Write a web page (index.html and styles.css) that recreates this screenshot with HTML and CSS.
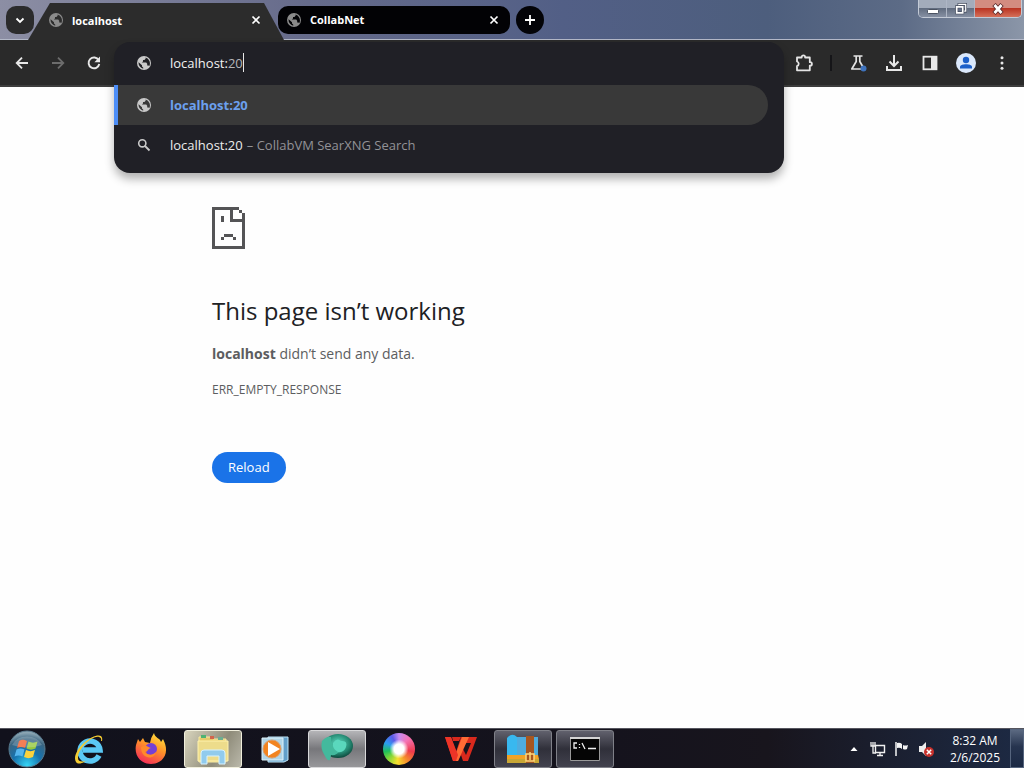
FILE: index.html
```
<!DOCTYPE html>
<html lang="en">
<head>
<meta charset="utf-8">
<meta name="viewport" content="width=device-width, initial-scale=1">
<title>localhost</title>
<link rel="stylesheet" href="styles.css">
</head>
<body>
<svg class="defs" aria-hidden="true">
  <symbol id="globe" viewBox="0 0 16 16">
    <circle cx="8" cy="8" r="7" fill="currentColor"/>
    <path d="M2.6 7.2 6 10.2v1.2l1.2 1v1.3A6 6 0 0 1 2.6 7.2zM9.6 2.6v1.2L8.4 5H7v1.4L5.8 7.6h4.4l1 1.2v1.8h1.4l.6.6a6 6 0 0 0-3.6-8.6z" fill="var(--hole)"/>
  </symbol>
  <symbol id="close" viewBox="0 0 10 10"><path d="M1.500 1.500 8.500 8.500M8.500 1.500 1.500 8.500" stroke="currentColor" stroke-width="1.700"/></symbol>
</svg>

<header class="tabstrip">
  <button class="round-btn" aria-label="Search tabs"><svg width="10" height="10" viewBox="0 0 10 10"><path d="M1.500 3.500 5 7l3.500-3.500" fill="none" stroke="#fff" stroke-width="1.800"/></svg></button>
  <div class="tab tab-active">
    <svg class="favicon" width="16" height="16"><use href="#globe"/></svg>
    <span class="tab-title">localhost</span>
    <button class="tab-close" aria-label="Close localhost"><svg width="10" height="10"><use href="#close"/></svg></button>
  </div>
  <div class="tab tab-idle">
    <svg class="favicon" width="16" height="16"><use href="#globe"/></svg>
    <span class="tab-title">CollabNet</span>
    <button class="tab-close" aria-label="Close CollabNet"><svg width="10" height="10"><use href="#close"/></svg></button>
  </div>
  <button class="round-btn new-tab" aria-label="New tab"><svg width="12" height="12" viewBox="0 0 12 12"><path d="M6 1v10M1 6h10" stroke="#fff" stroke-width="1.800"/></svg></button>
  <div class="window-controls">
    <button aria-label="Minimize"><svg width="14" height="12" viewBox="0 0 14 12"><rect x="1.500" y="6.500" width="11" height="4" rx="1" fill="#fff" stroke="#4b5362"/></svg></button>
    <button aria-label="Restore"><svg width="12" height="12" viewBox="0 0 14 14"><path d="M4.500 1.500h8v8h-8z" fill="none" stroke="#434b5c" stroke-width="3"/><path d="M4.500 1.500h8v8h-8z" fill="none" stroke="#fff" stroke-width="1.500"/><path d="M2 4.500h7v7H2z" fill="#65708a" stroke="#434b5c" stroke-width="3.500"/><path d="M2 4.500h7v7H2z" fill="none" stroke="#fff" stroke-width="2"/></svg></button>
    <button class="win-close" aria-label="Close window"><svg width="14" height="12" viewBox="0 0 14 12"><path d="M3 1.500 11 10.500M11 1.500 3 10.500" stroke="#5c2a2a" stroke-width="4.500"/><path d="M3.500 2 10.500 10M10.500 2 3.500 10" stroke="#fff" stroke-width="2.700"/></svg></button>
  </div>
</header>

<nav class="toolbar">
  <button class="tool" aria-label="Back"><svg width="16" height="16" viewBox="0 0 16 16"><path d="M14 8H3M8 2.700 2.700 8 8 13.300" fill="none" stroke="#e8e8e8" stroke-width="1.800"/></svg></button>
  <button class="tool" aria-label="Forward" disabled><svg width="16" height="16" viewBox="0 0 16 16"><path d="M2 8h11M8 2.700 13.300 8 8 13.300" fill="none" stroke="#6c6c6c" stroke-width="1.800"/></svg></button>
  <button class="tool" aria-label="Reload this page"><svg width="16" height="16" viewBox="0 0 16 16"><path d="M12.700 5.200A5.400 5.400 0 1 0 13.300 9" fill="none" stroke="#e8e8e8" stroke-width="1.900"/><path d="M14 1.500v5.700H8.400z" fill="#e8e8e8"/></svg></button>
  <div class="omnibox">
    <div class="omnibox-popup">
      <div class="row row-input">
        <svg class="row-icon" width="16" height="16"><use href="#globe"/></svg>
        <span class="address"><input class="address-input" value="localhost:" aria-label="Address and search bar" size="9"><span class="port">20</span><i class="caret"></i></span>
      </div>
      <a class="row row-selected" href="#"><svg class="row-icon" width="16" height="16"><use href="#globe"/></svg><b>localhost:20</b></a>
      <a class="row" href="#"><svg class="row-icon" width="16" height="16" viewBox="0 0 16 16"><circle cx="6.300" cy="6.300" r="3.600" fill="none" stroke="currentColor" stroke-width="1.600"/><path d="m9 9 4.500 4.500" stroke="currentColor" stroke-width="1.800"/></svg><span>localhost:20</span><span class="engine">– CollabVM SearXNG Search</span></a>
    </div>
  </div>
  <button class="tool" aria-label="Extensions"><svg width="20" height="20" viewBox="0 0 20 20"><path d="M3 4.500h4.700V4a1.700 1.700 0 0 1 3.400 0v.5h4.700v4.700h.4a1.700 1.700 0 0 1 0 3.400h-.4v4.700H3v-4.200a2.400 2.400 0 0 0 0-4.600z" fill="none" stroke="#e4e4e4" stroke-width="1.800" stroke-linejoin="round"/></svg></button>
  <span class="divider"></span>
  <button class="tool" aria-label="Labs"><svg width="20" height="20" viewBox="0 0 20 20"><path d="M5.500 3h9M8.200 3v5.500L3.800 16h12.400L11.800 8.500V3" fill="none" stroke="#e4e4e4" stroke-width="1.700" stroke-linejoin="round"/><circle cx="15.500" cy="15.500" r="3" fill="#3f73bd"/></svg></button>
  <button class="tool" aria-label="Downloads"><svg width="18" height="18" viewBox="0 0 18 18"><path d="M9 1v10.500M4.500 7.500 9 12l4.500-4.500M2 12v4h14v-4" fill="none" stroke="#e8e8e8" stroke-width="2"/></svg></button>
  <button class="tool" aria-label="Side panel"><svg width="16" height="16" viewBox="0 0 16 16"><rect x="1.500" y="1.700" width="13" height="12.600" fill="none" stroke="#e8e8e8" stroke-width="1.800"/><path d="M9 2h5.500v12H9z" fill="#e8e8e8"/></svg></button>
  <button class="tool" aria-label="Profile"><svg width="20" height="20" viewBox="0 0 20 20"><circle cx="10" cy="10" r="10" fill="#dbe8fb"/><circle cx="10" cy="7" r="3.200" fill="#1c5fc9"/><path d="M4 15.500v-1.700c0-3.500 12-3.500 12 0v1.700z" fill="#1c5fc9"/></svg></button>
  <button class="tool" aria-label="Menu"><svg width="16" height="16" viewBox="0 0 16 16"><g fill="#e8e8e8"><circle cx="8" cy="2.800" r="1.500"/><circle cx="8" cy="8" r="1.500"/><circle cx="8" cy="13.200" r="1.500"/></g></svg></button>
</nav>

<main class="page">
  <div class="error">
    <svg class="sad" width="34" height="42" viewBox="0 0 34 42" shape-rendering="crispEdges"><path d="M0 0h27v3H3v36h27V15H18V3h3v9h9V9h3v33H0zM27 3h3v3h-3zM30 6h3v3h-3zM9 9h3v6H9zM12 27h9v3h-9zM9 30h3v3H9zM21 30h3v3h-3z" fill="#545456"/></svg>
    <h1>This page isn’t working</h1>
    <p class="summary"><strong>localhost</strong> didn’t send any data.</p>
    <p class="code">ERR_EMPTY_RESPONSE</p>
    <button class="reload">Reload</button>
  </div>
</main>

<footer class="taskbar">
  <div class="apps">
    <button class="start" aria-label="Start"><svg width="38" height="38" viewBox="0 0 38 38">
      <defs><radialGradient id="orb" cx=".5" cy=".95" r=".9"><stop offset="0" stop-color="#35d5f5"/><stop offset=".45" stop-color="#1672ae"/><stop offset=".8" stop-color="#3a6581"/><stop offset="1" stop-color="#8ba5b3"/></radialGradient></defs>
      <circle cx="19" cy="19" r="18" fill="url(#orb)" stroke="#587a8e"/>
      <path d="M11 11c3-2 5-1.500 8 0l-2 7c-3-1.500-5-1.500-8 0z" fill="#ef5e2c"/><path d="M20.500 11.500c3 1.500 6 1.500 9 0l-2 7c-3 1.500-6 1.500-9 0z" fill="#95c83f"/><path d="M8.500 19.500c3-1.500 5-1.500 8 0l-2 7c-3-1.500-5-1.500-8 0z" fill="#55b5ed"/><path d="M18 20c3 1.500 6 1.500 9 0l-2 7c-3 1.500-6 1.500-9 0z" fill="#fbd23d"/>
      <path d="M4 15a16 13 0 0 1 30 0q-15 5-30 0z" fill="#fff" opacity=".2"/></svg></button>
    <button class="app" aria-label="Internet Explorer"><svg width="32" height="32" viewBox="0 0 32 32"><path d="M26 22.500A10 10 0 1 1 27 17H10" fill="none" stroke="#5bc8f4" stroke-width="5.500"/><path d="M29 8c2-9-9-6-17 1C4 16 0 24 3 29c2 3 7 1 10-1-4 1-8 1-8-3C5 15 20 2 26 4c2 .5 2.500 2 2 4z" fill="#f5cc32"/></svg></button>
    <button class="app" aria-label="Firefox"><svg width="34" height="34" viewBox="0 0 34 34"><defs><linearGradient id="fox" x1=".8" y1="0" x2=".3" y2="1"><stop offset="0" stop-color="#ffe63f"/><stop offset=".45" stop-color="#ff9428"/><stop offset="1" stop-color="#f32b58"/></linearGradient></defs><path d="M20 1c1 5 6 5 7 9l2-3c8 15-1 25-12 25S0 23 2 13l2-6 2 3 3-4 2 4 5 1q1-6 4-10z" fill="url(#fox)"/><circle cx="17" cy="17" r="6" fill="#7540d5"/><path d="M7 15c5-3 7 0 10 1-3 0-3 4-6 4 3 4 8 3 11 0-1 8-15 8-15-5z" fill="#ff8a2b"/></svg></button>
    <button class="app app-open app-explorer" aria-label="Windows Explorer"><svg width="34" height="34" viewBox="0 0 34 34"><path d="M3 5h12l2 2h13v23H3z" fill="#e5cb6b" stroke="#f8eca4"/><path d="M5 3h5v3H5z" fill="#4eb373"/><path d="M14 4h4v3h-4z" fill="#d3654c"/><path d="M22 5h5v3h-5z" fill="#6cae90"/><path d="M2 9h30v20H2z" fill="#eddc8b" stroke="#fff2ae"/><path d="M5 32V21q0-3 3-3h18q3 0 3 3v11h-6v-8H11v8z" fill="#91cbed" stroke="#d7f2ff"/></svg></button>
    <button class="app" aria-label="Media Player"><svg width="30" height="30" viewBox="0 0 30 30"><path d="M8 3h20v23l-4 2H8z" fill="#639fc9" stroke="#bfe4f6"/><path d="M2 4h21v22H2z" fill="#b0d5e8" stroke="#e0f3fb"/><circle cx="12" cy="15" r="9" fill="#f28420" stroke="#d9a070"/><path d="m8 8 12 7-12 7z" fill="#fff"/></svg></button>
    <button class="app app-open app-grey" aria-label="Messenger"><svg width="34" height="34" viewBox="0 0 34 34"><defs><radialGradient id="teal" cx=".5" cy=".4" r=".6"><stop offset="0" stop-color="#60dfc3"/><stop offset=".65" stop-color="#258a73"/><stop offset="1" stop-color="#0d483c"/></radialGradient></defs><ellipse cx="18" cy="14" rx="15" ry="12" fill="url(#teal)"/><path d="M2 9q5-5 9-4-1 8 9 14-4 5-9 4l-1 5q-3 1-5-4Q0 17 2 9z" fill="#43b99d"/><path d="M13 11q4-6 8-2 7-1 5 6-2 6-8 5-6-3-5-9z" fill="#5ad8bd"/></svg></button>
    <button class="app" aria-label="Color Browser"><span class="color-wheel"></span></button>
    <button class="app" aria-label="WPS Office"><svg width="34" height="28" viewBox="0 0 34 28"><path d="M1 2h6l5 15L17 2h16l-9 24h-5l-2-6-3 6H9z" fill="#d9291d"/><path d="M20 8h7l-5 12-3-6z" fill="#17141d"/><path d="M18 2h7L14 26H9z" fill="#ff6b35"/><path d="M1 2h6l7 18-2 6H9z" fill="#ed3427"/><path d="M8 2h9l-2 4H9z" fill="#d9291d"/></svg></button>
    <button class="app app-open app-dark" aria-label="Archiver"><svg width="34" height="32" viewBox="0 0 34 32"><path d="M1 5q5-6 10-1v19H1z" fill="#38b8ef"/><path d="M11 4h21v20H11z" fill="#4eacdf"/><path d="M1 23h16v7H1z" fill="#8fc544"/><path d="M1 22h31l1 4H1z" fill="#f1a327"/><path d="M1 26h32v4H1z" fill="#c8a635"/><path d="M20 3h8v27h-8z" fill="#a65620"/><path d="M20 21h8v7h-8zM24 19v8" fill="none" stroke="#ffd67a" stroke-width="1.500"/></svg></button>
    <button class="app app-open app-dark" aria-label="Command Prompt"><svg width="30" height="24" viewBox="0 0 30 24"><path d="M.5.500h29v23H.5z" fill="#050505" stroke="#999"/><path d="M0 0h30v2H0z" fill="#d4d4d4"/><path d="M7 6H4v5h3M9.500 7v1M9.500 10v1M12 6l3 6M18 11.500h8" fill="none" stroke="#eee" stroke-width="1.300"/></svg></button>
  </div>
  <div class="tray">
    <svg width="8" height="6" viewBox="0 0 8 6"><path d="M4 1 7.500 5h-7z" fill="#fff"/></svg>
    <svg class="tray-net" width="16" height="16" viewBox="0 0 16 16"><path d="M5.500 4.500h9v7h-9zM7 14.500h6M10 12v2" fill="none" stroke="#f0f0f0" stroke-width="1.400"/><path d="M1 1v4h4V1M3 1v11h3" fill="none" stroke="#f0f0f0" stroke-width="1.300"/></svg>
    <svg width="16" height="16" viewBox="0 0 16 16"><path d="M2 1v14" stroke="#f4f4f4" stroke-width="1.500"/><path d="M3 2q3-1 5 1v5q-2-2-5-1zM9 4q2 1 5 0l-1 4q-2 1-4 0z" fill="#f4f4f4"/></svg>
    <svg width="16" height="16" viewBox="0 0 16 16"><path d="M1 5h3l4-4v14l-4-4H1z" fill="#eee"/><circle cx="11" cy="11" r="5" fill="#c7302b"/><path d="m8.800 8.800 4.400 4.400m0-4.400-4.400 4.400" stroke="#fff" stroke-width="1.500"/></svg>
    <div class="clock"><span>8:32 AM</span><span>2/6/2025</span></div>
    <button class="show-desktop" aria-label="Show desktop"></button>
  </div>
</footer>
</body>
</html>
```
FILE: styles.css
```
* { box-sizing: border-box; }
html, body { height: 100%; }
body {
  margin: 0;
  display: flex;
  flex-direction: column;
  overflow: hidden;
  background: #fefefe;
  font-family: "Open Sans", "Noto Sans", sans-serif;
  font-size: 13px;
}
button {
  margin: 0;
  padding: 0;
  border: 0;
  background: none;
  font: inherit;
  display: flex;
  align-items: center;
  justify-content: center;
}
svg { display: block; flex: none; }
.defs { position: absolute; width: 0; height: 0; }

.tabstrip {
  flex: none;
  display: flex;
  align-items: center;
  height: 40px;
  padding: 0 2px 0 6px;
  border-bottom: 1px solid #b3b8c8;
  background: linear-gradient(90deg, #8c8ea4 0, #666b8b 30%, #525f86 55%, #4d5e7d 75%, #5c6b86 88%, #8b96a8 100%);
}
.round-btn { flex: none; width: 28px; height: 28px; border-radius: 10px; background: #2b2b2c; }
.new-tab { margin-left: 6px; border-radius: 50%; background: #030307; }
.tab { display: flex; align-items: center; color: #fff; font-size: 11px; font-weight: 700; }
.tab-title { flex: 1; }
.tab-close { width: 16px; height: 16px; color: #fff; }
.favicon { margin-right: 8px; color: #8b8b8b; }
.tab-active {
  --hole: #2c2c2c;
  align-self: stretch;
  width: 256px;
  margin: 3px 0 -1px -6px;
  padding: 0 20px 3px 20px;
  background: #2c2c2c;
  clip-path: polygon(22px 0, 236px 0, 256px 100%, 0 100%);
}
.tab-idle {
  --hole: #020205;
  width: 232px;
  height: 28px;
  margin-left: -6px;
  padding: 0 8px;
  border-radius: 10px;
  background: #020205;
}
.window-controls {
  align-self: flex-start;
  display: flex;
  height: 18px;
  margin-left: auto;
  border: 1px solid #c3cad6;
  border-top: 0;
  border-radius: 0 0 5px 5px;
  overflow: hidden;
}
.window-controls button {
  width: 28px;
  border-right: 1px solid #aeb6c5;
  background: linear-gradient(#a3acbb 45%, #626d80 50%, #8690a3);
}
.window-controls .win-close { width: 46px; border: 0; background: linear-gradient(#d38c80 45%, #ba3523 50%, #d5705a); }

.toolbar {
  flex: none;
  display: flex;
  align-items: center;
  height: 47px;
  padding: 0 4px;
  border-bottom: 2px solid #3d3d3d;
  background: #2a2a2a;
}
.tool { flex: none; width: 36px; height: 36px; }
.divider { flex: none; width: 2px; height: 16px; margin: 0 8px; background: #151518; }
.omnibox { position: relative; z-index: 1; flex: 1; align-self: stretch; margin: 0 2px; }
.omnibox-popup {
  --hole: #202024;
  position: absolute;
  top: 2px;
  left: 0;
  right: 0;
  padding-bottom: 8px;
  border-radius: 16px;
  background: #202026;
  box-shadow: 0 6px 10px rgba(0, 0, 0, .3);
}
.row { display: flex; align-items: center; height: 40px; padding-left: 22px; color: #ececec; text-decoration: none; }
.row-icon { margin-right: 18px; color: #c9c9c9; }
.row-input { height: 43px; padding-bottom: 2px; }
.row-selected {
  --hole: #393939;
  margin-right: 16px;
  padding-left: 18px;
  border-left: 4px solid #4c8df6;
  border-radius: 0 20px 20px 0;
  background: #393939;
  color: #6ca0ee;
}
.engine { margin-left: 4px; color: #929297; }
.address { display: flex; align-items: center; color: #b5b5b9; }
.address-input {
  field-sizing: content;
  padding: 0;
  border: 0;
  outline: 0;
  background: none;
  color: #f2f2f2;
  font: inherit;
}
.caret { width: 1px; height: 19px; background: #e8e8e8; }

.page { flex: 1; min-height: 0; padding: 120px 24px 0; }
.error { max-width: 600px; margin: 0 auto; color: #5c5d60; }
h1 { margin: 44px 0 0; color: #202124; font-size: 24px; line-height: 36px; font-weight: 500; }
p { margin: 0; }
.summary { margin-top: 14px; font-size: 14px; line-height: 22px; }
.code { margin-top: 15px; font-size: 12px; line-height: 20px; }
.reload { margin-top: 52px; height: 31px; padding: 0 16px 2px; border-radius: 16px; background: #1a73e8; color: #fff; }

.taskbar {
  flex: none;
  display: flex;
  justify-content: space-between;
  height: 40px;
  border-top: 1px solid #55555e;
  background: linear-gradient(90deg, #11111c, #15131d 60%, #18151d 75%, #1d2a44);
}
.apps { display: flex; align-items: center; gap: 4px; padding-left: 7px; }
.start { width: 40px; height: 38px; margin-right: 9px; }
.app { width: 58px; height: 38px; border-radius: 3px; }
.app-open { border: 1px solid #b0b0b2; }
.app-explorer { border-color: #f0eedc; background: linear-gradient(120deg, #d8d4bd, #8f8c7a 60%, #bab8aa); }
.app-grey { border-color: #d8d8da; background: linear-gradient(#b5b5b8, #77777b 50%, #97979a); }
.app-dark { border-color: #7f8088; background: linear-gradient(#61616d, #30303a 50%, #42424e); }
.color-wheel {
  width: 32px;
  height: 32px;
  border-radius: 50%;
  background:
    radial-gradient(#fff 22%, transparent 42%),
    conic-gradient(#c58bf0, #f573b4 12%, #ef3a4c 28%, #f58a2c 40%, #f7e02f 52%, #7bd63a 64%, #1fc05a 72%, #2a9cf0 82%, #5a5be8 92%, #c58bf0);
}
.tray { display: flex; align-items: center; gap: 8px; }
.tray-net { margin-left: 4px; }
.clock { display: flex; flex-direction: column; align-items: center; margin: 0 2px 0 8px; color: #fff; font-size: 12px; line-height: 17px; }
.show-desktop { width: 14px; height: 39px; border: 1px solid #56657e; background: linear-gradient(#5b6981, #26344f 45%, #1b2944); }
```
